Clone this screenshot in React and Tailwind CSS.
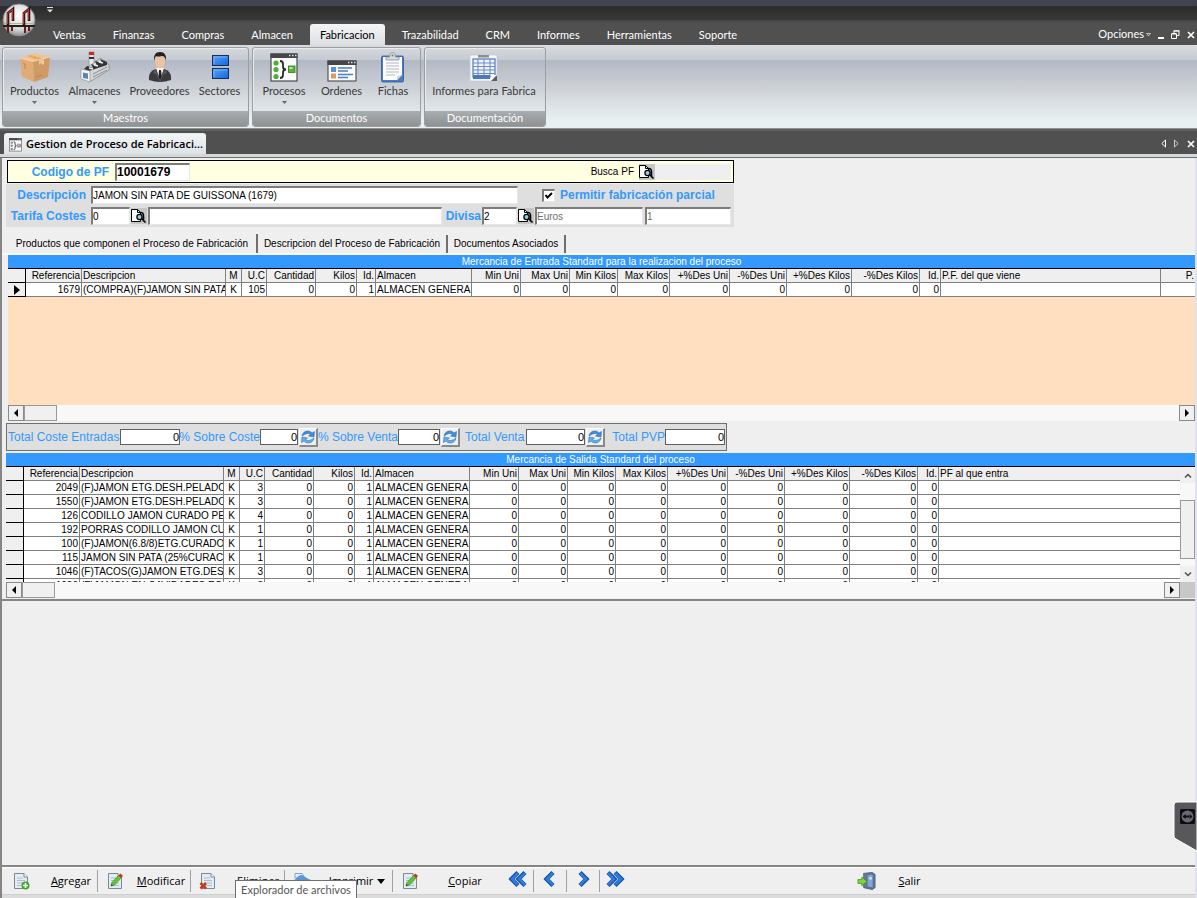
import React from "react";
import clsx from "clsx";

const menuTabs = [
  "Ventas",
  "Finanzas",
  "Compras",
  "Almacen",
  "Fabricacion",
  "Trazabilidad",
  "CRM",
  "Informes",
  "Herramientas",
  "Soporte",
];

/* ---------- Ribbon icons ---------- */

const BoxIcon = () => (
  <svg width="32" height="32" viewBox="0 0 32 32">
    <path d="M1 7 L14 10 L15 31 L3 26 Z" fill="#e0ab75" />
    <path d="M14 10 L31 6 L29 26 L15 31 Z" fill="#d09a66" />
    <path d="M1 7 L17 2 L31 6 L14 11 Z" fill="#f0c48e" />
    <path d="M8 5 L12 4 L25 8 L20 9.500 Z" fill="#e0ab72" />
    <path d="M20 9.500 L25 8 L25 13 L23 14 L22 12 L20 14 Z" fill="#e9c79b" />
    <path d="M1 7 L14 10 M14 10 L31 6" stroke="#f7d9ae" strokeWidth="0.800" fill="none" />
    <path d="M4 12 L6 13 L6 18 M17 26 L23 24" stroke="#b97f49" strokeWidth="0.800" fill="none" />
  </svg>
);

const FactoryIcon = () => (
  <svg width="32" height="32" viewBox="0 0 32 32">
    <rect x="10" y="1" width="5" height="14" fill="#e8e8e8" stroke="#777" strokeWidth="0.500" />
    <rect x="10" y="1" width="5" height="3" fill="#c92b2b" />
    <rect x="10" y="6" width="5" height="2" fill="#333" />
    <path d="M3 20 L22 7 L30 14 L30 19 L12 30 L3 28 Z" fill="#d4d6d8" stroke="#777" strokeWidth="0.600" />
    <path d="M8 15 L14 17 L12 13 L18 15 L16 10 L23 12 L21 8 L28 11 L28 14 L10 20 L5 18 Z" fill="#34363a" />
    <path d="M10 17 L14 18 M15 14 L19 15 M20 11 L24 12" stroke="#f2f2f2" strokeWidth="1.500" />
    <path d="M2 18 L11 20 L11 31 L2 28 Z" fill="#f4f5f6" stroke="#888" strokeWidth="0.600" />
    <path d="M4 21.500 L9 22.500 L9 28 L4 27 Z" fill="#5a86b8" />
    <path d="M14 23 L28 16 M14 26 L28 19" stroke="#8a8d90" strokeWidth="1" />
  </svg>
);

const PersonIcon = () => (
  <svg width="32" height="32" viewBox="0 0 32 32">
    <path d="M5 29 Q4 20 12 18 L20 18 Q28 20 27 29 Q16 33 5 29 Z" fill="#3b3b3d" />
    <path d="M12 17 L16 29 L20 17 Z" fill="#f5f5f5" />
    <path d="M15 19 L17 19 L18 27 L16 30 L14.500 27 Z" fill="#222" />
    <path d="M11 18 L9 22 L12 23 L16 31 L20 23 L23 22 L21 18 L16 29 Z" fill="#59595c" />
    <ellipse cx="16" cy="10" rx="5" ry="7.500" fill="#ecc3a0" />
    <path d="M10 10 Q9 1 16 1 Q23 1 22 10 Q21 5 18 5 Q13 6 12 5 Q11 6 10 10 Z" fill="#222" />
  </svg>
);

const SectorsIcon = () => (
  <svg width="32" height="32" viewBox="0 0 32 32">
    <defs>
      <linearGradient id="sector" x1="0" y1="0" x2="1" y2="1">
        <stop offset="0" stopColor="#5aa5f8" />
        <stop offset="1" stopColor="#1465d8" />
      </linearGradient>
    </defs>
    <rect x="8.500" y="4.500" width="16" height="10" fill="url(#sector)" stroke="#12305e" />
    <rect x="8.500" y="17.500" width="16" height="10" fill="url(#sector)" stroke="#12305e" />
    <path d="M10 13 V6 H23 M10 26 V19 H23" stroke="#6fb0fb" fill="none" />
  </svg>
);

const ProcessIcon = ({ size = 32, className }) => (
  <svg width={size} height={size} viewBox="0 0 32 32" className={className}>
    <rect x="3" y="3" width="26" height="27" fill="#fafafa" stroke="#4a4a4a" strokeWidth="1.200" />
    <rect x="2.500" y="2.500" width="27" height="4.500" fill="#44464a" />
    <path d="M21 4.500 h1.500 M24 4.500 h1.500 M27 4.500 h1.500" stroke="#ddd" strokeWidth="1.500" />
    <circle cx="8" cy="12" r="2.600" fill="#4fae35" />
    <circle cx="8" cy="18.500" r="2.600" fill="#4fae35" />
    <circle cx="8" cy="25.500" r="2.600" fill="#4fae35" />
    <path d="M12 10 Q15 10 15 13 V15.500 Q15 18.500 18 18.500 Q15 18.500 15 21.500 V24 Q15 27 12 27" stroke="#2b2b2b" strokeWidth="1.800" fill="none" />
    <rect x="20.500" y="15" width="6.500" height="6.500" fill="#57b53a" stroke="#2c7a1c" strokeWidth="0.800" />
    <rect x="21.500" y="16" width="3" height="2" fill="#b8ecaa" />
  </svg>
);

const OrdersIcon = () => (
  <svg width="32" height="32" viewBox="0 0 32 32">
    <rect x="2" y="10" width="28" height="20" fill="#fafafa" stroke="#555" strokeWidth="1.200" />
    <rect x="1.500" y="9.500" width="29" height="4.500" fill="#44464a" />
    <path d="M22 11.500 h1.500 M25 11.500 h1.500 M28 11.500 h1.500" stroke="#ddd" strokeWidth="1.500" />
    <rect x="5" y="16" width="5" height="5" fill="#5a93dc" />
    <rect x="5" y="22.500" width="5" height="5" fill="#e09a5c" />
    <path d="M12 17 h14 M12 20 h10 M12 23.500 h15 M12 26.500 h10" stroke="#4b7fc6" strokeWidth="1.300" />
  </svg>
);

const ClipboardIcon = () => (
  <svg width="32" height="32" viewBox="0 0 32 32">
    <rect x="4.500" y="5" width="22" height="26" rx="1.500" fill="#4a7cc8" stroke="#2c559a" strokeWidth="0.800" />
    <path d="M6 6 H25 V24 L20 29 H6 Z" fill="#fcfcfc" />
    <path d="M25 24 L20 29 L20 25 Z" fill="#cfd6e0" />
    <path d="M9 12 h13 M9 15 h13 M9 18 h13 M9 21 h13 M9 24 h9" stroke="#b3b8bf" />
    <path d="M9 9 V6 H12.500 Q12.500 1.500 15.500 1.500 Q18.500 1.500 18.500 6 H22 V9 Z" fill="#d8dadd" stroke="#8b8e93" strokeWidth="0.800" />
    <circle cx="15.500" cy="4.500" r="1" fill="#777" />
  </svg>
);

const ReportIcon = () => (
  <svg width="32" height="32" viewBox="0 0 32 32">
    <path d="M2 4 H29 V30 H2 Z" fill="#f5f6f8" stroke="#c9ccd1" strokeWidth="0.800" />
    <rect x="10" y="4" width="11" height="2.500" fill="#8b8e93" />
    <rect x="5" y="8" width="22" height="18" fill="#eef3fb" stroke="#5577b4" strokeWidth="1.200" />
    <path d="M5 12 h22 M5 15.500 h22 M5 19 h22 M5 22.500 h22 M10 8 v18 M16 8 v18 M22 8 v18" stroke="#6d8fc8" strokeWidth="1.100" />
    <rect x="5" y="24" width="17" height="4" fill="#4a78c4" />
    <path d="M23 30 L29 30 L29 24 Z" fill="#5c6066" />
    <path d="M22 30 L23 24 L29 24 Z" fill="#fff" />
  </svg>
);

const ribbonGroups = [
  {
    title: "Maestros",
    width: "w-[247px]",
    items: [
      { label: "Productos", Icon: BoxIcon, menu: true, width: "w-[60px]" },
      { label: "Almacenes", Icon: FactoryIcon, menu: true, width: "w-[60px]" },
      { label: "Proveedores", Icon: PersonIcon, width: "w-[70px]" },
      { label: "Sectores", Icon: SectorsIcon, width: "w-[50px]" },
    ],
  },
  {
    title: "Documentos",
    width: "w-[169px]",
    items: [
      { label: "Procesos", Icon: ProcessIcon, menu: true, width: "w-[58px]" },
      { label: "Ordenes", Icon: OrdersIcon, width: "w-[57px]" },
      { label: "Fichas", Icon: ClipboardIcon, width: "w-[46px]" },
    ],
  },
  {
    title: "Documentación",
    width: "w-[122px]",
    items: [{ label: "Informes para Fabrica", Icon: ReportIcon, width: "w-[118px]" }],
  },
];

/* ---------- Small icons ---------- */

const SearchDocIcon = () => (
  <svg width="16" height="16" viewBox="0 0 16 16">
    <rect width="16" height="16" fill="#c6c6c6" />
    <path d="M0.500 1.500 H6.500 L9.500 4.500 V13.500 H0.500 Z" fill="#fff" stroke="#000" />
    <path d="M6.500 1.500 V4.500 H9.500" fill="none" stroke="#000" />
    <circle cx="8.500" cy="9" r="2.600" fill="#8fd0ec" stroke="#000" strokeWidth="1.300" />
    <path d="M9 4.500 Q13 4 12.500 9 V13.500 M11 11 L14.500 14.500" fill="none" stroke="#000" strokeWidth="1.600" />
  </svg>
);

const RefreshIcon = () => (
  <svg width="16" height="16" viewBox="0 0 16 16">
    <path d="M2 7 Q3 2 8 2 Q10.500 2 12 4 L14.500 2.500 L14 8 L8.500 7 L10.500 5.500 Q9 4 7 4.500 Q4.500 5 2 7 Z" fill="#3d8fe0" stroke="#1d5fae" strokeWidth="0.500" />
    <path d="M14 9 Q13 14 8 14 Q5.500 14 4 12 L1.500 13.500 L2 8 L7.500 9 L5.500 10.500 Q7 12 9 11.500 Q11.500 11 14 9 Z" fill="#5fb0f0" stroke="#1d5fae" strokeWidth="0.500" />
  </svg>
);

const PageShape = () => (
  <>
    <path d="M2.500 1.500 H12 L15.500 5 V16.500 H2.500 Z" fill="#e3ebf3" stroke="#7d8894" />
    <path d="M12 1.500 V5 H15.500" fill="#fff" stroke="#7d8894" />
    <path d="M5 6 h6 M5 8.500 h8 M5 11 h8 M5 13.500 h8" stroke="#a9bed4" />
  </>
);

const AddIcon = () => (
  <svg width="18" height="18" viewBox="0 0 18 18">
    <PageShape />
    <circle cx="13.500" cy="13.500" r="4" fill="#3fa72e" />
    <path d="M13.500 11 V16 M11 13.500 H16" stroke="#fff" strokeWidth="1.600" />
  </svg>
);

const EditIcon = () => (
  <svg width="18" height="18" viewBox="0 0 18 18">
    <PageShape />
    <path d="M5 14 L6 10.500 L13 3 L15.500 5.500 L8.500 13 Z" fill="#63c435" stroke="#3d8b1e" strokeWidth="0.700" />
    <path d="M12.500 3.500 L14.500 1.500 L17 4 L15 6 Z" fill="#c8342a" />
    <path d="M5 14 L5.500 12 L7 13.500 Z" fill="#333" />
  </svg>
);

const DeleteIcon = () => (
  <svg width="18" height="18" viewBox="0 0 18 18">
    <PageShape />
    <path d="M1.500 11 L7 16.500 M7 11 L1.500 16.500" stroke="#c23a22" strokeWidth="2.600" />
  </svg>
);

const PrintIcon = () => (
  <svg width="20" height="18" viewBox="0 0 20 18">
    <path d="M2 1.500 H9 L12 6 H2 Z" fill="#e4eef8" stroke="#8aa0b8" />
    <path d="M2 8 Q5 3 9 3 L17 8 Z" fill="#4e9ae4" />
    <rect x="1" y="8" width="17" height="7" rx="1" fill="#c9d2dc" stroke="#7f8a96" />
    <rect x="4" y="11" width="11" height="5" fill="#fff" stroke="#8a96a2" />
  </svg>
);

const ExitIcon = () => (
  <svg width="20" height="20" viewBox="0 0 20 20">
    <path d="M7 2 L16 1 L19 3 V17 L16 19 L7 17 Z" fill="#6d7b8c" stroke="#48525e" strokeWidth="0.800" />
    <path d="M10.500 3.500 L17 2.500 V17.500 L10.500 16 Z" fill="#7fa6d4" stroke="#3e5f8a" strokeWidth="0.700" />
    <path d="M13 6 L15.500 5.700 V8.500 H13 Z" fill="#dce9f6" />
    <path d="M1 8.500 H5 V6 L10.500 10.500 L5 15 V12.500 H1 Z" fill="#7fd63e" stroke="#3f8f1e" strokeWidth="0.800" />
  </svg>
);

const Chevrons = ({ double, flip }) => (
  <svg width={double ? 20 : 14} height="18" viewBox={double ? "0 0 20 18" : "0 0 14 18"} className={clsx("mb-1", flip && "-scale-x-100")}>
    {double && (
      <>
        <path d="M17 2.500 L10.500 9 L17 15.500" stroke="#1c4f9c" strokeWidth="4.400" fill="none" />
        <path d="M17 3 L11 9 L17 15" stroke="#2b7de0" strokeWidth="2.600" fill="none" />
      </>
    )}
    <path d="M10 2.500 L3.500 9 L10 15.500" stroke="#1c4f9c" strokeWidth="4.400" fill="none" />
    <path d="M10 3 L4 9 L10 15" stroke="#2b7de0" strokeWidth="2.600" fill="none" />
  </svg>
);

const Logo = () => (
  <svg width="36" height="36" viewBox="0 0 36 36">
    <defs>
      <radialGradient id="orb" cx="0.5" cy="0.35" r="0.65">
        <stop offset="0" stopColor="#ffffff" />
        <stop offset="0.7" stopColor="#d2d4d6" />
        <stop offset="1" stopColor="#8d9094" />
      </radialGradient>
    </defs>
    <circle cx="18" cy="18" r="16" fill="url(#orb)" stroke="#8b8b8b" />
    <path d="M3 21.500 H33" stroke="#a9c47a" />
    <path d="M2 24 H34" stroke="#2a1c1c" strokeWidth="2" />
    <path d="M7 23 V11 L12 7 V19 M23 23 V11 L28 7 V19" stroke="#241616" strokeWidth="2.600" fill="none" />
    <path d="M6.500 22 V11.500 L11.500 7.500 V18 M22.500 22 V11.500 L27.500 7.500 V18" stroke="#b8322c" strokeWidth="1.200" fill="none" />
    <path d="M7 25 V31 M11 25 V29 M24 25 V31 M28 25 V29" stroke="#6b1a18" strokeWidth="2" />
  </svg>
);

/* ---------- Grids ---------- */

const columns = [
  { key: "ref", label: "Referencia", width: "w-[56px]", right: true },
  { key: "desc", label: "Descripcion", width: "w-[144px]" },
  { key: "m", label: "M", width: "w-[16px]", center: true },
  { key: "uc", label: "U.C", width: "w-[25px]", right: true },
  { key: "cantidad", label: "Cantidad", width: "w-[49px]", right: true },
  { key: "kilos", label: "Kilos", width: "w-[41px]", right: true },
  { key: "id", label: "Id.", width: "w-[19px]", right: true },
  { key: "almacen", label: "Almacen", width: "w-[96px]" },
  { key: "minUni", label: "Min Uni", width: "w-[49px]", right: true },
  { key: "maxUni", label: "Max Uni", width: "w-[49px]", right: true },
  { key: "minKilos", label: "Min Kilos", width: "w-[48px]", right: true },
  { key: "maxKilos", label: "Max Kilos", width: "w-[52px]", right: true },
  { key: "masUni", label: "+%Des Uni", width: "w-[60px]", right: true },
  { key: "menosUni", label: "-%Des Uni", width: "w-[57px]", right: true },
  { key: "masKilos", label: "+%Des Kilos", width: "w-[65px]", right: true },
  { key: "menosKilos", label: "-%Des Kilos", width: "w-[68px]", right: true },
  { key: "idPf", label: "Id.", width: "w-[21px]", right: true },
];

const entradaColumns = [
  ...columns,
  { key: "pf", label: "P.F. del que viene", width: "w-[220px]" },
  { key: "p", label: "P.", right: true },
];

const salidaColumns = [...columns, { key: "pf", label: "PF al que entra" }];

const makeRow = (ref, desc, uc) => ({
  ref,
  desc,
  m: "K",
  uc,
  cantidad: 0,
  kilos: 0,
  id: 1,
  almacen: "ALMACEN GENERA",
  minUni: 0,
  maxUni: 0,
  minKilos: 0,
  maxKilos: 0,
  masUni: 0,
  menosUni: 0,
  masKilos: 0,
  menosKilos: 0,
  idPf: 0,
});

const entradas = [makeRow(1679, "(COMPRA)(F)JAMON SIN PATA", 105)];

const salidas = [
  makeRow(2049, "(F)JAMON ETG.DESH.PELADO", 3),
  makeRow(1550, "(F)JAMON ETG.DESH.PELADO", 3),
  makeRow(126, "CODILLO JAMON CURADO PE", 4),
  makeRow(192, "PORRAS CODILLO JAMON CU", 1),
  makeRow(100, "(F)JAMON(6.8/8)ETG.CURADO", 1),
  makeRow(115, "JAMON SIN PATA (25%CURAC", 1),
  makeRow(1046, "(F)TACOS(G)JAMON ETG.DES", 3),
  makeRow(1036, "(F)JAMON EN CAVIDADES ECO", 3),
];

const alignOf = (col) => {
  if (col.center) return "text-center";
  return col.right ? "text-right" : "text-left";
};

const DataGrid = ({ cols, rows, current }) => (
  <table className="w-full table-fixed border-separate border-spacing-0 bg-white text-[10px] leading-[13px] text-black">
    <thead>
      <tr className="bg-[#efefef]">
        <th className="w-[18px] border-r border-b border-black p-0" />
        {cols.map((col) => (
          <th
            key={col.key}
            className={clsx(
              "h-[14px] overflow-hidden border-r border-b border-[#808080] px-px py-0 font-normal whitespace-nowrap last:border-r-0",
              col.width,
              alignOf(col)
            )}
          >
            {col.label}
          </th>
        ))}
      </tr>
    </thead>
    <tbody>
      {rows.map((row, index) => (
        <tr key={row.ref}>
          <td className="h-[14px] border-r border-b border-black bg-[#efefef] p-0">
            {current === index && (
              <svg width="6" height="10" viewBox="0 0 6 10" className="mx-auto">
                <path d="M0 0 L6 5 L0 10 Z" fill="#000" />
              </svg>
            )}
          </td>
          {cols.map((col) => (
            <td
              key={col.key}
              className={clsx(
                "h-[14px] overflow-hidden border-r border-b border-[#808080] px-px py-0 whitespace-nowrap last:border-r-0",
                alignOf(col)
              )}
            >
              {row[col.key]}
            </td>
          ))}
        </tr>
      ))}
    </tbody>
  </table>
);

const GridTitle = ({ children }) => (
  <h2 className="h-[14px] border-b border-black bg-[#3399ff] text-center text-[10px] leading-[13px] text-white">{children}</h2>
);

const ArrowButton = ({ label, right }) => (
  <button aria-label={label} className="flex h-4 w-4 items-center justify-center border border-[#8a8a8a] bg-[#f0f0f0]">
    <svg width="4" height="8" viewBox="0 0 4 8">
      <path d={right ? "M0 0 L4 4 L0 8 Z" : "M4 0 L0 4 L4 8 Z"} fill="#000" />
    </svg>
  </button>
);

const HorizontalScroll = () => (
  <div className="flex h-4 min-w-0 flex-1 bg-[#f8f8f8]">
    <ArrowButton label="Desplazar a la izquierda" />
    <div className="h-4 w-[33px] border border-[#9a9a9a] bg-[#f0f0f0]" />
    <div className="flex-1" />
    <ArrowButton label="Desplazar a la derecha" right />
  </div>
);

/* ---------- Form parts ---------- */

const TextField = ({ className, ...props }) => (
  <input
    type="text"
    className={clsx(
      "h-[18px] border-t-2 border-r border-b border-l-2 border-t-[#7c7c7c] border-r-[#e8e8e8] border-b-[#e8e8e8] border-l-[#7c7c7c] bg-white leading-[14px] outline-none",
      className
    )}
    {...props}
  />
);

const SearchButton = ({ label }) => (
  <button aria-label={label} className="h-4 w-4 shrink-0">
    <SearchDocIcon />
  </button>
);

const formLabel = "text-right text-[12px] leading-[18px] font-bold whitespace-nowrap text-[#3399ff]";

const TotalField = ({ id, label, width, inputWidth, refresh }) => (
  <div className={clsx("flex items-center justify-end", width)}>
    <label htmlFor={id} className="flex-1 text-[12px] leading-4 whitespace-nowrap text-[#3399ff]">
      {label}
    </label>
    <input id={id} type="text" defaultValue="0" className={clsx("h-4 border border-[#5f5f5f] bg-white text-right text-[11px] outline-none", inputWidth)} />
    {refresh && (
      <button aria-label={"Recalcular " + label} className="ml-px flex h-[19px] w-[19px] items-center justify-center border-t border-r-2 border-b-2 border-l border-t-white border-r-[#8a8a8a] border-b-[#8a8a8a] border-l-white bg-[#efefef]">
        <RefreshIcon />
      </button>
    )}
  </div>
);

const Separator = () => <div className="h-[22px] w-px shrink-0 bg-[#a0a0a0]" />;

const ToolButton = ({ icon, label, width, textWidth, caret }) => (
  <button className={clsx("flex h-[26px] shrink-0 items-center pl-2 text-[11px] text-black", width)}>
    {icon}
    <span className={clsx("text-center", textWidth)}>
      <span className="underline">{label[0]}</span>
      {label.slice(1)}
    </span>
    {caret && (
      <svg width="8" height="5" viewBox="0 0 8 5">
        <path d="M0 0 H8 L4 5 Z" fill="#000" />
      </svg>
    )}
  </button>
);

const App = () => {
  return (
    <div className="relative flex min-h-screen flex-col overflow-hidden bg-[#efefef] font-['Liberation_Sans',Arial,sans-serif]">
      {/* Title bar */}
      <header className="font-['Lato','Open_Sans',sans-serif] text-[11px]">
        <div className="h-[6px] bg-[#41434f]" />
        <div className="h-[14px] bg-linear-to-b from-[#2b2b2b] to-[#383838] pl-[47px]">
          <svg width="6" height="7" viewBox="0 0 6 7">
            <path d="M0 1.500 H6" stroke="#ddd" />
            <path d="M0 3.500 H6 L3 6.500 Z" fill="#ddd" />
          </svg>
        </div>
        <div className="absolute top-[2px] left-px">
          <Logo />
        </div>

        <nav className="flex h-[25px] items-end border-t-2 border-[#47474a] bg-[#505050] pl-[43px]">
          {menuTabs.map((tab) => (
            <button
              key={tab}
              className={clsx(
                "mr-[7px] h-[21px] px-[10px] leading-[20px]",
                tab === "Fabricacion" ? "rounded-t-[3px] bg-linear-to-b from-[#f4f5f6] to-[#dcdfe2] text-black" : "text-white"
              )}
            >
              {tab}
            </button>
          ))}
          <div className="ml-auto flex h-[21px] items-center gap-[7px] pr-[2px] text-white">
            <button className="flex items-center gap-[2px]">
              Opciones
              <svg width="5" height="4" viewBox="0 0 5 4">
                <path d="M0.500 0.500 H4.500 L2.500 3 Z" fill="none" stroke="#ddd" strokeWidth="0.800" />
              </svg>
            </button>
            <button aria-label="Minimizar">
              <svg width="6" height="8" viewBox="0 0 6 8">
                <path d="M0 7 H6" stroke="#fff" strokeWidth="2" />
              </svg>
            </button>
            <button aria-label="Restaurar">
              <svg width="9" height="9" viewBox="0 0 9 9">
                <path d="M3 3 V1 H8 V5.500 H6 M2.500 0.800 H8.500 M0.500 4 H5.500 V8.500 H0.500 Z M0.500 3.500 H5.500" fill="none" stroke="#fff" />
              </svg>
            </button>
            <button aria-label="Cerrar">
              <svg width="8" height="8" viewBox="0 0 8 8">
                <path d="M1 1 L7 7 M7 1 L1 7" stroke="#fff" strokeWidth="1.600" />
              </svg>
            </button>
          </div>
        </nav>

        {/* Ribbon */}
        <div className="flex h-[84px] gap-[3px] rounded-t-[3px] border-b border-[#8f9294] bg-[linear-gradient(to_bottom,#d9dcdf_0px,#c5cad1_15px,#b2b8c4_15px,#cfd3d8_45px,#e8f0f2_75px)] px-[2px] pt-[2px]">
          {ribbonGroups.map((group) => (
            <section key={group.title} className={clsx("flex h-[80px] flex-col overflow-hidden rounded-[3px] border border-[#9a9ea3] shadow-[inset_1px_1px_0_#e9ebed]", group.width)}>
              <div className="flex flex-1 justify-center pr-[2px]">
                {group.items.map(({ label, Icon, menu, width }) => (
                  <button key={label} className={clsx("flex flex-col items-center pt-[3px] text-[#3a3a3a]", width)}>
                    <Icon />
                    <span className="leading-4 whitespace-nowrap">{label}</span>
                    {menu && (
                      <svg width="5" height="3" viewBox="0 0 5 3" className="mt-[2px]">
                        <path d="M0 0 H5 L2.500 3 Z" fill="#666" />
                      </svg>
                    )}
                  </button>
                ))}
              </div>
              <h2 className="h-[15px] bg-linear-to-b from-[#aaadae] to-[#8f9293] text-center leading-[14px] text-white">{group.title}</h2>
            </section>
          ))}
        </div>

        {/* Document tabs */}
        <div className="flex h-[25px] items-end border-t-2 border-[#5f6060] bg-[#505050] pl-1">
          <button className="flex h-[21px] w-[202px] items-center gap-[3px] rounded-t-[3px] border-t border-[#d6efee] bg-linear-to-b from-[#f2f5f6] to-[#dde3e5] pl-1 font-['Open_Sans','Noto_Sans',sans-serif] font-semibold whitespace-nowrap text-black">
            <ProcessIcon size={15} className="grayscale" />
            Gestion de Proceso de Fabricaci...
          </button>
          <div className="ml-auto flex h-[21px] items-center gap-2 pr-[2px]">
            <button aria-label="Anterior">
              <svg width="5" height="9" viewBox="0 0 5 9">
                <path d="M4.500 1 V8 L0.800 4.500 Z" fill="none" stroke="#fff" />
              </svg>
            </button>
            <button aria-label="Siguiente">
              <svg width="5" height="9" viewBox="0 0 5 9">
                <path d="M0.500 1 V8 L4.200 4.500 Z" fill="none" stroke="#ccc" />
              </svg>
            </button>
            <button aria-label="Cerrar pestaña">
              <svg width="8" height="8" viewBox="0 0 8 8">
                <path d="M1 1 L7 7 M7 1 L1 7" stroke="#fff" strokeWidth="1.600" />
              </svg>
            </button>
          </div>
        </div>
        <div className="h-1 border-t-2 border-b border-t-[#d3d8da] border-b-[#6f6f6f] bg-[#d3d8da]" />
      </header>

      <main className="flex flex-1 flex-col border-r-2 border-l-2 border-r-[#dde3ee] border-l-[#858585]">
        {/* Product header */}
        <div className="mt-[2px] ml-[5px] flex h-[23px] w-[727px] items-center border border-black bg-[#ffffe1]">
          <label htmlFor="codigo" className={clsx(formLabel, "w-[101px]")}>
            Codigo de PF
          </label>
          <TextField id="codigo" defaultValue="10001679" className="ml-[6px] w-[75px] text-[12px] font-bold" />
          <span className="ml-auto text-[10px]">Busca PF</span>
          <div className="ml-[5px] flex h-4 w-[92px] bg-[#efefef]">
            <SearchButton label="Busca PF" />
          </div>
          <div className="w-[2px]" />
        </div>

        <div className="mt-px ml-1 flex w-[728px] flex-col gap-[3px] bg-[#dfdfdf] py-[2px] text-[10px]">
          <div className="flex items-center">
            <label htmlFor="descripcion" className={clsx(formLabel, "w-[80px]")}>
              Descripción
            </label>
            <TextField id="descripcion" defaultValue="JAMON SIN PATA DE GUISSONA (1679)" className="ml-[5px] w-[427px]" />
            <label htmlFor="parcial" className={clsx(formLabel, "ml-6 flex items-center gap-[5px]")}>
              <span className="grid h-[13px] w-[13px]">
                <input
                  id="parcial"
                  type="checkbox"
                  defaultChecked
                  className="peer col-start-1 row-start-1 h-[13px] w-[13px] appearance-none border border-t-2 border-l-2 border-[#e8e8e8] border-t-[#7c7c7c] border-l-[#7c7c7c] bg-white"
                />
                <svg width="13" height="13" viewBox="0 0 13 13" className="pointer-events-none invisible col-start-1 row-start-1 peer-checked:visible">
                  <path d="M3.500 6 L5.500 8.500 L10 4" stroke="#000" strokeWidth="2" fill="none" />
                </svg>
              </span>
              Permitir fabricación parcial
            </label>
          </div>
          <div className="flex items-center">
            <label htmlFor="tarifa" className={clsx(formLabel, "w-[80px]")}>
              Tarifa Costes
            </label>
            <TextField id="tarifa" defaultValue="0" className="mr-px ml-[5px] w-[39px]" />
            <SearchButton label="Buscar tarifa" />
            <TextField aria-label="Nombre de tarifa" className="ml-px w-[294px]" />
            <label htmlFor="divisa" className={clsx(formLabel, "w-[39px]")}>
              Divisa
            </label>
            <TextField id="divisa" defaultValue="2" className="mr-px ml-px w-[35px]" />
            <SearchButton label="Buscar divisa" />
            <TextField aria-label="Nombre de divisa" defaultValue="Euros" className="ml-px w-[108px] text-[#6d6d6d]" />
            <TextField aria-label="Cambio" defaultValue="1" className="ml-[2px] w-[86px] text-[#6d6d6d]" />
          </div>
        </div>

        {/* Tabs */}
        <div role="tablist" className="ml-[6px] flex h-[26px] items-end text-[10px]">
          <button role="tab" aria-selected="true" className="h-[19px] w-[250px] border-r-2 border-[#6f6f6f] text-center leading-[19px] whitespace-nowrap">
            Productos que componen el Proceso de Fabricación
          </button>
          <button role="tab" aria-selected="false" className="h-[18px] w-[190px] border-r-2 border-[#6f6f6f] text-center leading-[18px] whitespace-nowrap">
            Descripcion del Proceso de Fabricación
          </button>
          <button role="tab" aria-selected="false" className="h-[18px] w-[118px] border-r-2 border-[#6f6f6f] text-center leading-[18px] whitespace-nowrap">
            Documentos Asociados
          </button>
        </div>
        <div className="h-[2px] bg-[#fbfbfb]" />

        <section className="ml-[6px]">
          <GridTitle>Mercancia de Entrada Standard para la realizacion del proceso</GridTitle>
          <div className="h-[136px] overflow-hidden bg-[#ffdfbf]">
            <DataGrid cols={entradaColumns} rows={entradas} current={0} />
          </div>
          <HorizontalScroll />
        </section>

        {/* Totals */}
        <div className="mt-[2px] ml-1 flex h-7 w-[721px] items-center border border-[#6f6f6f] bg-[#dfdfdf] pl-px">
          <TotalField id="coste" label="Total Coste Entradas" width="w-[172px]" inputWidth="w-[60px]" />
          <div className="w-[2px]" />
          <TotalField id="sobreCoste" label="% Sobre Coste" width="w-[136px]" inputWidth="w-[38px]" refresh />
          <div className="w-[4px]" />
          <TotalField id="sobreVenta" label="% Sobre Venta" width="w-[138px]" inputWidth="w-[42px]" refresh />
          <div className="w-[5px]" />
          <TotalField id="venta" label="Total Venta" width="w-[140px]" inputWidth="w-[59px]" refresh />
          <div className="w-[8px]" />
          <TotalField id="pvp" label="Total PVP" width="w-[112px]" inputWidth="w-[60px]" />
        </div>

        <section className="mt-[2px] ml-1">
          <GridTitle>Mercancia de Salida Standard del proceso</GridTitle>
          <div className="flex h-[115px]">
            <div className="min-w-0 flex-1 overflow-hidden">
              <DataGrid cols={salidaColumns} rows={salidas} />
            </div>
            <div className="flex w-[15px] flex-col bg-[#f8f8f8]">
              <button aria-label="Subir" className="flex h-4 items-center justify-center bg-[#f0f0f0]">
                <svg width="8" height="5" viewBox="0 0 8 5">
                  <path d="M1 4.500 L4 1.500 L7 4.500" stroke="#505050" strokeWidth="1.500" fill="none" />
                </svg>
              </button>
              <div className="mt-[17px] h-[59px] border border-[#9a9a9a] bg-[#f0f0f0]" />
              <button aria-label="Bajar" className="mt-auto flex h-4 items-center justify-center bg-[#f0f0f0]">
                <svg width="8" height="5" viewBox="0 0 8 5">
                  <path d="M1 0.500 L4 3.500 L7 0.500" stroke="#505050" strokeWidth="1.500" fill="none" />
                </svg>
              </button>
            </div>
          </div>
          <div className="flex">
            <HorizontalScroll />
            <div className="h-4 w-[15px] bg-[#c8c8c8]" />
          </div>
        </section>
        <div className="mt-[1px] h-[2px] bg-[#858585]" />
      </main>

      {/* Toolbar */}
      <footer className="border-r-2 border-l-2 border-r-[#dde3ee] border-l-[#858585] font-['Open_Sans','Noto_Sans',sans-serif]">
        <div className="h-[2px] bg-[#858585]" />
        <div className="flex h-[27px] items-center border-t border-white pl-[2px]">
          <ToolButton icon={<AddIcon />} label="Agregar" width="w-[93px]" textWidth="w-[66px] pl-4" />
          <Separator />
          <ToolButton icon={<EditIcon />} label="Modificar" width="w-[92px]" textWidth="w-[66px] pl-2" />
          <Separator />
          <ToolButton icon={<DeleteIcon />} label="Eliminar" width="w-[93px]" textWidth="w-[66px] pl-4" />
          <Separator />
          <ToolButton icon={<PrintIcon />} label="Imprimir" width="w-[107px]" textWidth="w-[64px] pl-3" caret />
          <Separator />
          <ToolButton icon={<EditIcon />} label="Copiar" width="w-[110px]" textWidth="w-[84px] pl-2" />
          <div className="flex items-center">
            <button aria-label="Primero" className="flex w-[30px] justify-center">
              <Chevrons double />
            </button>
            <Separator />
            <button aria-label="Anterior registro" className="flex w-[32px] justify-center">
              <Chevrons />
            </button>
            <Separator />
            <button aria-label="Siguiente registro" className="flex w-[32px] justify-center">
              <Chevrons flip />
            </button>
            <Separator />
            <button aria-label="Ultimo" className="flex w-[30px] justify-center">
              <Chevrons double flip />
            </button>
          </div>
          <div className="ml-[219px]">
            <ToolButton icon={<ExitIcon />} label="Salir" width="w-[90px]" textWidth="w-[66px] pl-1" />
          </div>
        </div>
        <div className="h-1 border-t border-[#cfcfcf] bg-[#dcdcdc]" />
      </footer>

      {/* Taskbar tooltip */}
      <div role="tooltip" className="absolute bottom-0 left-[235px] h-[18px] w-[122px] border border-b-0 border-[#6f6f6f] bg-white text-center font-['Lato','Open_Sans',sans-serif] text-[11px] leading-[17px] whitespace-nowrap text-[#575757]">
        Explorador de archivos
      </div>

      {/* Remote session handle */}
      <div className="absolute right-0 bottom-[46px]">
        <svg width="24" height="51" viewBox="0 0 24 51">
          <path d="M24 1 H4 Q1 1 1 4 V35 Q1 37 3 38 L24 50 Z" fill="#58585a" stroke="#fff" />
          <rect x="7" y="8" width="15" height="15" rx="1.500" fill="#0c0c18" />
          <circle cx="14.500" cy="15.500" r="6" fill="#6a6a6e" />
          <path d="M9.500 15.500 L12.500 13 V18 Z M19.500 15.500 L16.500 13 V18 Z M12 14.500 H17 V16.500 H12 Z" fill="#0c0c18" />
        </svg>
      </div>
    </div>
  );
};

export default App;
